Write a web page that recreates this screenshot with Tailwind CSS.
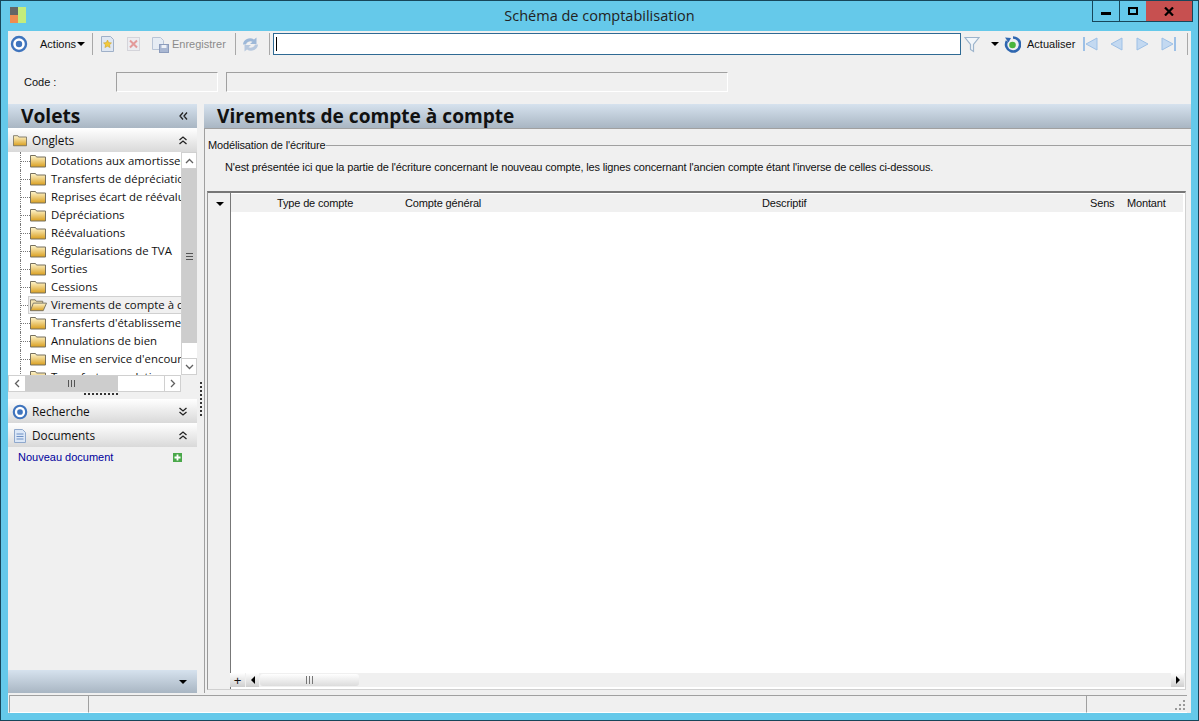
<!DOCTYPE html>
<html lang="fr">

<head>
    <meta charset="UTF-8">
    <title>Schéma de comptabilisation</title>
    <script src="https://cdn.jsdelivr.net/npm/@tailwindcss/browser@4"></script>
</head>

<body class="bg-[#65c9ea] font-['Liberation_Sans',sans-serif] text-[11px] text-[#111] overflow-hidden">
    <svg class="absolute w-0 h-0">
        <defs>
            <linearGradient id="fold" x1="0" y1="0" x2="0" y2="1">
                <stop offset="0" stop-color="#fff6cf" />
                <stop offset="1" stop-color="#d99f1f" />
            </linearGradient>
            <symbol id="folder" viewBox="0 0 16 14">
                <path d="M.5 13V1.500h5l1 1.500h9v10z" fill="url(#fold)" stroke="#77715f" />
            </symbol>
            <symbol id="folder-open" viewBox="0 0 18 14">
                <path d="M.5 13V1.500h5l1 1.500h7v2" fill="#f3e3b0" stroke="#77715f" />
                <path d="M.5 13l3-8h14l-3.500 8z" fill="url(#fold)" stroke="#77715f" />
            </symbol>
            <symbol id="radio" viewBox="0 0 18 18">
                <circle cx="9" cy="9" r="7" fill="#fff" stroke="#3f74bd" stroke-width="2.400" />
                <circle cx="9" cy="9" r="3.200" fill="#3f74bd" />
            </symbol>
        </defs>
    </svg>

    <div class="w-[1199px] h-[721px] border border-[#17465a] flex flex-col">
        <!-- barre de titre -->
        <div class="h-[30px] shrink-0 flex relative">
            <svg class="ml-[9px] mt-[6px] w-[17px] h-[17px]" viewBox="0 0 17 17">
                <rect width="8" height="8" fill="#666" />
                <rect y="8" width="8" height="8" fill="#f08c50" />
                <rect x="8" width="8" height="16" fill="#c4ec7c" />
            </svg>
            <div class="absolute inset-x-0 top-[5px] text-center font-['Open_Sans',sans-serif] text-[14.500px] text-[#222] leading-5">Schéma de comptabilisation</div>
            <div class="absolute top-[-1px] left-[1091px] h-[22px] flex border border-[#17465a]">
                <div class="w-[27px] flex items-center justify-center border-r border-[#17465a]">
                    <div class="w-[10px] h-[3px] bg-black mt-[4px]"></div>
                </div>
                <div class="w-[26px] flex items-center justify-center">
                    <div class="w-[10px] h-[8px] border-2 border-black"></div>
                </div>
                <div class="w-[46px] bg-[#c75050] flex items-center justify-center">
                    <svg class="w-[10px] h-[9px]" viewBox="0 0 10 9"><path d="M1 .5l8 8M9 .5l-8 8" stroke="#000" stroke-width="2.200" /></svg>
                </div>
            </div>
        </div>

        <div class="ml-[7px] w-[1183px] h-[682px] bg-[#f0f0f0] flex flex-col">
            <!-- barre d'outils -->
            <div class="h-[26px] shrink-0 flex items-center relative">
                <svg class="ml-[2px] w-[18px] h-[18px]"><use href="#radio" /></svg>
                <span class="ml-[12px] w-[36px] whitespace-nowrap">Actions</span>
                <div class="ml-[1px] w-0 h-0 border-x-[4px] border-x-transparent border-t-[4px] border-t-black"></div>
                <div class="ml-[7px] w-px h-[22px] bg-[#a8a8a8]"></div>
                <svg class="ml-[7px] w-[15px] h-[16px]" viewBox="0 0 15 16">
                    <path d="M1.500.5h9l3 3v12h-12z" fill="#dfe7f2" stroke="#9fb0c8" />
                    <path d="M7.500 4l1.200 2.600 2.800.3-2 1.900.6 2.800-2.600-1.400-2.600 1.400.6-2.800-2-1.900 2.800-.3z" fill="#f3c93a" stroke="#c99a1c" stroke-width=".5" />
                </svg>
                <svg class="ml-[11px] w-[15px] h-[16px]" viewBox="0 0 15 16">
                    <rect x="1.500" y="1.500" width="12" height="13" fill="#ececf0" stroke="#d4d4da" />
                    <path d="M4 4.500l7 7M11 4.500l-7 7" stroke="#e39a9a" stroke-width="2" />
                </svg>
                <svg class="ml-[11px] w-[17px] h-[17px]" viewBox="0 0 17 17">
                    <path d="M.5 1.500h8l3 3v9H.5z" fill="#e6ecf4" stroke="#b8c4d6" />
                    <rect x="7.500" y="8.500" width="9" height="8" fill="#a9b7d2" stroke="#8c9cbc" />
                    <rect x="9.500" y="9" width="5" height="3" fill="#eef2f8" />
                </svg>
                <span class="ml-[3px] w-[55px] text-[#8b8b8b] whitespace-nowrap">Enregistrer</span>
                <div class="ml-[8px] w-px h-[22px] bg-[#a8a8a8]"></div>
                <svg class="ml-[6px] w-[17px] h-[17px]" viewBox="0 0 17 17">
                    <path d="M1 8.500a7 6.500 0 0 1 11-5L14.500 1.500v6.500H8l2.500-2.200A4.500 4 0 0 0 4 8.500z" fill="#9db8d8" />
                    <path d="M16 8.500a7 6.500 0 0 1-11 5L2.500 15.500V9H9l-2.500 2.200A4.500 4 0 0 0 13 8.500z" fill="#b7c8de" />
                </svg>
                <div class="ml-[10px] w-px h-[22px] bg-[#a8a8a8]"></div>
                <div class="ml-[3px] w-[688px] h-[22px] bg-white border border-[#2f6a94] flex items-center pl-[2px]">
                    <div class="w-px h-[14px] bg-black"></div>
                </div>
                <svg class="ml-[3px] w-[16px] h-[17px]" viewBox="0 0 16 17">
                    <path d="M1 1.500h14L9.500 8.500v7l-3-2v-5z" fill="#f2f6fa" stroke="#9db4cc" stroke-width="1.200" />
                </svg>
                <div class="ml-[11px] w-0 h-0 border-x-[4px] border-x-transparent border-t-[4px] border-t-black"></div>
                <svg class="ml-[5px] w-[17px] h-[17px]" viewBox="0 0 17 17">
                    <path d="M9 1.500A7 7 0 1 1 3 5" fill="none" stroke="#2f67b0" stroke-width="2.600" />
                    <circle cx="8.500" cy="9" r="3.300" fill="#49b53c" />
                    <path d="M1 1.500l6 .5-2.500 4.500z" fill="#2f67b0" />
                </svg>
                <span class="ml-[6px] w-[47px] whitespace-nowrap">Actualiser</span>
                <svg class="ml-[9px] w-[15px] h-[14px]" viewBox="0 0 15 14">
                    <path d="M1 0v14" stroke="#9dc0e6" stroke-width="2" /><path d="M14 1v12L3 7z" fill="#c3d9f1" stroke="#9dc0e6" />
                </svg>
                <svg class="ml-[12px] w-[13px] h-[14px]" viewBox="0 0 13 14"><path d="M12 1v12L1 7z" fill="#c3d9f1" stroke="#9dc0e6" /></svg>
                <svg class="ml-[13px] w-[13px] h-[14px]" viewBox="0 0 13 14"><path d="M1 1v12l11-6z" fill="#c3d9f1" stroke="#9dc0e6" /></svg>
                <svg class="ml-[12px] w-[15px] h-[14px]" viewBox="0 0 15 14">
                    <path d="M14 0v14" stroke="#9dc0e6" stroke-width="2" /><path d="M1 1v12l11-6z" fill="#c3d9f1" stroke="#9dc0e6" />
                </svg>
                <div class="ml-[11px] w-px h-[22px] bg-[#a8a8a8]"></div>
            </div>

            <!-- ligne code -->
            <div class="h-[47px] shrink-0 flex items-start pt-[15px]">
                <span class="ml-[16px] w-[92px] leading-[20px]">Code :</span>
                <div class="w-[102px] h-[20px] border border-[#a0a0a0] border-r-white border-b-white"></div>
                <div class="ml-[8px] w-[502px] h-[20px] border border-[#a0a0a0] border-r-white border-b-white"></div>
            </div>

            <!-- contenu -->
            <div class="h-[589px] shrink-0 flex">
                <!-- volets -->
                <div class="w-[189px] shrink-0 flex flex-col">
                    <div class="h-[24px] shrink-0 bg-linear-to-b from-[#d6e2ee] to-[#a9b6c3] flex items-center justify-between pl-[13px] pr-[9px]">
                        <span class="text-[19.200px] font-bold leading-none font-['Open_Sans',sans-serif]">Volets</span>
                        <svg class="w-[9px] h-[8px]" viewBox="0 0 9 8"><path d="M4 .5L1 4l3 3.500M8 .5L5 4l3 3.500" fill="none" stroke="#222" stroke-width="1.300" /></svg>
                    </div>
                    <div class="h-[24px] shrink-0 bg-linear-to-b from-white to-[#d9d9d9] flex items-center justify-between pl-[5px] pr-[10px] font-['Open_Sans',sans-serif]">
                        <div class="flex items-center pt-[1px]">
                            <svg class="w-[14px] h-[13px]"><use href="#folder" /></svg>
                            <span class="ml-[5px] text-[11.800px]">Onglets</span>
                        </div>
                        <svg class="w-[8px] h-[9px]" viewBox="0 0 8 9"><path d="M.5 4L4 1l3.500 3M.5 8L4 5l3.500 3" fill="none" stroke="#222" stroke-width="1.300" /></svg>
                    </div>
                    <!-- arbre -->
                    <div class="h-[223px] shrink-0 flex bg-white">
                        <div class="w-[173px] shrink-0 overflow-hidden whitespace-nowrap font-['Open_Sans',sans-serif] text-[11.400px] pl-[12px]">
                            <div class="h-[18px] flex items-center border-l border-dotted border-[#777]"><div class="w-[9px] shrink-0 border-t border-dotted border-[#777]"></div><svg class="w-[16px] h-[14px] shrink-0"><use href="#folder" /></svg><span class="ml-[5px]">Dotations aux amortissements</span></div>
                            <div class="h-[18px] flex items-center border-l border-dotted border-[#777]"><div class="w-[9px] shrink-0 border-t border-dotted border-[#777]"></div><svg class="w-[16px] h-[14px] shrink-0"><use href="#folder" /></svg><span class="ml-[5px]">Transferts de dépréciations</span></div>
                            <div class="h-[18px] flex items-center border-l border-dotted border-[#777]"><div class="w-[9px] shrink-0 border-t border-dotted border-[#777]"></div><svg class="w-[16px] h-[14px] shrink-0"><use href="#folder" /></svg><span class="ml-[5px]">Reprises écart de réévaluation</span></div>
                            <div class="h-[18px] flex items-center border-l border-dotted border-[#777]"><div class="w-[9px] shrink-0 border-t border-dotted border-[#777]"></div><svg class="w-[16px] h-[14px] shrink-0"><use href="#folder" /></svg><span class="ml-[5px]">Dépréciations</span></div>
                            <div class="h-[18px] flex items-center border-l border-dotted border-[#777]"><div class="w-[9px] shrink-0 border-t border-dotted border-[#777]"></div><svg class="w-[16px] h-[14px] shrink-0"><use href="#folder" /></svg><span class="ml-[5px]">Réévaluations</span></div>
                            <div class="h-[18px] flex items-center border-l border-dotted border-[#777]"><div class="w-[9px] shrink-0 border-t border-dotted border-[#777]"></div><svg class="w-[16px] h-[14px] shrink-0"><use href="#folder" /></svg><span class="ml-[5px]">Régularisations de TVA</span></div>
                            <div class="h-[18px] flex items-center border-l border-dotted border-[#777]"><div class="w-[9px] shrink-0 border-t border-dotted border-[#777]"></div><svg class="w-[16px] h-[14px] shrink-0"><use href="#folder" /></svg><span class="ml-[5px]">Sorties</span></div>
                            <div class="h-[18px] flex items-center border-l border-dotted border-[#777]"><div class="w-[9px] shrink-0 border-t border-dotted border-[#777]"></div><svg class="w-[16px] h-[14px] shrink-0"><use href="#folder" /></svg><span class="ml-[5px]">Cessions</span></div>
                            <div class="h-[18px] flex items-center border-l border-dotted border-[#777]"><div class="w-[7px] shrink-0 border-t border-dotted border-[#777]"></div><div class="h-[18px] shrink-0 flex items-center bg-[#f0f0f0] border border-[#d0d0d0] pl-[1px] pr-[40px]"><svg class="w-[17px] h-[14px] shrink-0"><use href="#folder-open" /></svg><span class="ml-[4px]">Virements de compte à compte</span></div></div>
                            <div class="h-[18px] flex items-center border-l border-dotted border-[#777]"><div class="w-[9px] shrink-0 border-t border-dotted border-[#777]"></div><svg class="w-[16px] h-[14px] shrink-0"><use href="#folder" /></svg><span class="ml-[5px]">Transferts d'établissement</span></div>
                            <div class="h-[18px] flex items-center border-l border-dotted border-[#777]"><div class="w-[9px] shrink-0 border-t border-dotted border-[#777]"></div><svg class="w-[16px] h-[14px] shrink-0"><use href="#folder" /></svg><span class="ml-[5px]">Annulations de bien</span></div>
                            <div class="h-[18px] flex items-center border-l border-dotted border-[#777]"><div class="w-[9px] shrink-0 border-t border-dotted border-[#777]"></div><svg class="w-[16px] h-[14px] shrink-0"><use href="#folder" /></svg><span class="ml-[5px]">Mise en service d'encours</span></div>
                            <div class="h-[18px] flex items-center border-l border-dotted border-[#777]"><div class="w-[9px] shrink-0 border-t border-dotted border-[#777]"></div><svg class="w-[16px] h-[14px] shrink-0"><use href="#folder" /></svg><span class="ml-[5px]">Transferts en relation</span></div>
                        </div>
                        <!-- ascenseur vertical -->
                        <div class="w-[16px] shrink-0 flex flex-col border-l border-[#d0d0d0]">
                            <div class="h-[17px] flex items-center justify-center border border-[#d0d0d0] border-l-0 bg-white">
                                <svg class="w-[9px] h-[6px]" viewBox="0 0 9 6"><path d="M1 5l3.500-3.500L8 5" fill="none" stroke="#606060" stroke-width="1.300" /></svg>
                            </div>
                            <div class="h-[174px] bg-[#cdcdcd] flex items-center justify-center">
                                <div class="w-[7px] h-[7px] border-y border-[#555] flex items-center"><div class="w-full h-px bg-[#555]"></div></div>
                            </div>
                            <div class="h-[15px] bg-white"></div>
                            <div class="h-[17px] flex items-center justify-center border border-[#d0d0d0] border-l-0 bg-white">
                                <svg class="w-[9px] h-[6px]" viewBox="0 0 9 6"><path d="M1 1l3.500 3.500L8 1" fill="none" stroke="#606060" stroke-width="1.300" /></svg>
                            </div>
                        </div>
                    </div>
                    <!-- ascenseur horizontal -->
                    <div class="h-[17px] w-[173px] shrink-0 flex bg-white border border-[#d0d0d0]">
                        <div class="w-[16px] flex items-center justify-center">
                            <svg class="w-[6px] h-[9px]" viewBox="0 0 6 9"><path d="M5 1L1.500 4.500 5 8" fill="none" stroke="#606060" stroke-width="1.300" /></svg>
                        </div>
                        <div class="w-[93px] bg-[#cdcdcd] flex items-center justify-center">
                            <div class="w-[7px] h-[7px] border-x border-[#555] flex justify-center"><div class="h-full w-px bg-[#555]"></div></div>
                        </div>
                        <div class="flex-1"></div>
                        <div class="w-[16px] flex items-center justify-center border-l border-[#d0d0d0]">
                            <svg class="w-[6px] h-[9px]" viewBox="0 0 6 9"><path d="M1 1l3.500 3.500L1 8" fill="none" stroke="#606060" stroke-width="1.300" /></svg>
                        </div>
                    </div>
                    <div class="h-[7px] shrink-0 flex justify-center pt-[1px] pr-[4px]">
                        <div class="w-[34px] h-[2px] border-t-2 border-dotted border-[#333]"></div>
                    </div>
                    <div class="h-[24px] shrink-0 bg-linear-to-b from-white to-[#d9d9d9] flex items-center justify-between pl-[4px] pr-[10px] font-['Open_Sans',sans-serif]">
                        <div class="flex items-center pt-[1px]">
                            <svg class="w-[16px] h-[16px]"><use href="#radio" /></svg>
                            <span class="ml-[4px] text-[11.800px]">Recherche</span>
                        </div>
                        <svg class="w-[8px] h-[9px]" viewBox="0 0 8 9"><path d="M.5 1L4 4l3.500-3M.5 5L4 8l3.500-3" fill="none" stroke="#222" stroke-width="1.300" /></svg>
                    </div>
                    <div class="h-[24px] shrink-0 bg-linear-to-b from-white to-[#d9d9d9] flex items-center justify-between pl-[6px] pr-[10px] font-['Open_Sans',sans-serif]">
                        <div class="flex items-center pt-[1px]">
                            <svg class="w-[12px] h-[14px]" viewBox="0 0 12 14">
                                <path d="M.5.500h8l3 3v10H.5z" fill="#dbe7f7" stroke="#8fa8cc" />
                                <path d="M2.500 5h7M2.500 7.500h7M2.500 10h7" stroke="#6d8fc4" />
                            </svg>
                            <span class="ml-[6px] text-[11.800px]">Documents</span>
                        </div>
                        <svg class="w-[8px] h-[9px]" viewBox="0 0 8 9"><path d="M.5 4L4 1l3.500 3M.5 8L4 5l3.500 3" fill="none" stroke="#222" stroke-width="1.300" /></svg>
                    </div>
                    <div class="h-[21px] shrink-0 flex items-center justify-between pl-[10px] pr-[15px]">
                        <span class="text-[#00009c]">Nouveau document</span>
                        <svg class="w-[9px] h-[9px]" viewBox="0 0 9 9">
                            <rect width="9" height="9" fill="#4aa84a" />
                            <path d="M4.500 1.500v6M1.500 4.500h6" stroke="#fff" stroke-width="1.800" />
                        </svg>
                    </div>
                    <div class="flex-1"></div>
                    <div class="h-[23px] shrink-0 bg-linear-to-b from-[#d6e2ee] to-[#a9b6c3] flex items-center justify-end pr-[10px]">
                        <div class="w-0 h-0 border-x-[4px] border-x-transparent border-t-[4px] border-t-black"></div>
                    </div>
                </div>

                <!-- séparateur -->
                <div class="w-[7px] shrink-0 pt-[278px] pl-[3px]">
                    <div class="w-px h-[34px] border-l-2 border-dotted border-[#333]"></div>
                </div>

                <!-- panneau droit -->
                <div class="w-[987px] shrink-0 flex flex-col">
                    <div class="h-[24px] shrink-0 bg-linear-to-b from-[#d6e2ee] to-[#a9b6c3] flex items-center pl-[13px] pt-[1px]">
                        <span class="text-[19.100px] font-bold leading-none font-['Open_Sans',sans-serif]">Virements de compte à compte</span>
                    </div>
                    <div class="flex-1 border-l border-t border-[#a0a0a0] flex flex-col pl-[2px]">
                        <div class="h-[31px] shrink-0 flex items-center pt-[1px] pl-[1px]">
                            <span class="tracking-[-0.15px] whitespace-nowrap">Modélisation de l'écriture</span>
                            <div class="flex-1 h-px bg-[#a0a0a0] ml-[1px]"></div>
                        </div>
                        <div class="h-[15px] shrink-0 flex items-center pl-[18px]">
                            <span class="whitespace-nowrap tracking-[-0.15px]">N'est présentée ici que la partie de l'écriture concernant le nouveau compte, les lignes concernant l'ancien compte étant l'inverse de celles ci-dessous.</span>
                        </div>
                        <!-- grille -->
                        <div class="mt-[16px] w-[979px] h-[499px] shrink-0 border-t-2 border-[#777] border-l border-l-[#999] border-r border-r-[#d0d0d0] border-b border-b-[#d0d0d0] flex">
                            <div class="w-[23px] shrink-0 bg-[#f0f0f0] border-r border-[#777] pt-[9px] pl-[8px]">
                                <div class="w-0 h-0 border-x-[4px] border-x-transparent border-t-[4px] border-t-black"></div>
                            </div>
                            <div class="flex-1 min-w-0 flex flex-col bg-white pt-[1px]">
                                <div class="h-[18px] shrink-0 bg-[#f0f0f0] flex items-center whitespace-nowrap tracking-[-0.15px] mr-[2px]">
                                    <span class="ml-[46px] w-[128px]">Type de compte</span>
                                    <span class="w-[357px]">Compte général</span>
                                    <span class="w-[328px]">Descriptif</span>
                                    <span class="w-[37px]">Sens</span>
                                    <span>Montant</span>
                                </div>
                                <div class="flex-1"></div>
                                <div class="h-[14px] shrink-0 mb-[2px] ml-[-1px] bg-[#f0f0f0] flex items-center">
                                    <div class="w-[15px] h-[14px] bg-linear-to-b from-white to-[#cfcfcf] flex items-center justify-center text-[13px] leading-none">+</div>
                                    <div class="ml-[1px] w-[13px] h-[14px] bg-linear-to-b from-white to-[#cfcfcf] flex items-center justify-center">
                                        <div class="w-0 h-0 border-y-[4px] border-y-transparent border-r-[4px] border-r-black"></div>
                                    </div>
                                    <div class="ml-[1px] w-[99px] h-[12px] rounded-[3px] bg-linear-to-b from-white to-[#dcdcdc] flex items-center justify-center">
                                        <div class="w-[7px] h-[8px] border-x border-[#777] flex justify-center"><div class="h-full w-px bg-[#777]"></div></div>
                                    </div>
                                    <div class="flex-1"></div>
                                    <div class="mr-[1px] w-[13px] h-[14px] bg-linear-to-b from-white to-[#cfcfcf] flex items-center justify-center">
                                        <div class="w-0 h-0 border-y-[4px] border-y-transparent border-l-[4px] border-l-black"></div>
                                    </div>
                                </div>
                            </div>
                        </div>
                    </div>
                </div>
            </div>

            <!-- barre d'état -->
            <div class="mt-[2px] h-[18px] shrink-0 flex border-t border-[#a0a0a0] ml-[1px] mr-[4px]">
                <div class="w-[79px] border-l border-[#a0a0a0] border-b border-b-white"></div>
                <div class="w-[998px] border-l border-[#a0a0a0] border-b border-b-white"></div>
                <div class="flex-1 border-l border-[#a0a0a0] border-b border-b-white flex items-end justify-end pr-[1px] pb-[1px]">
                    <svg class="w-[11px] h-[11px]" viewBox="0 0 11 11" fill="#9a9a9a">
                        <rect x="8" y="0" width="2" height="2" /><rect x="4" y="4" width="2" height="2" /><rect x="8" y="4" width="2" height="2" /><rect x="0" y="8" width="2" height="2" /><rect x="4" y="8" width="2" height="2" /><rect x="8" y="8" width="2" height="2" />
                    </svg>
                </div>
            </div>
        </div>
    </div>
</body>

</html>
